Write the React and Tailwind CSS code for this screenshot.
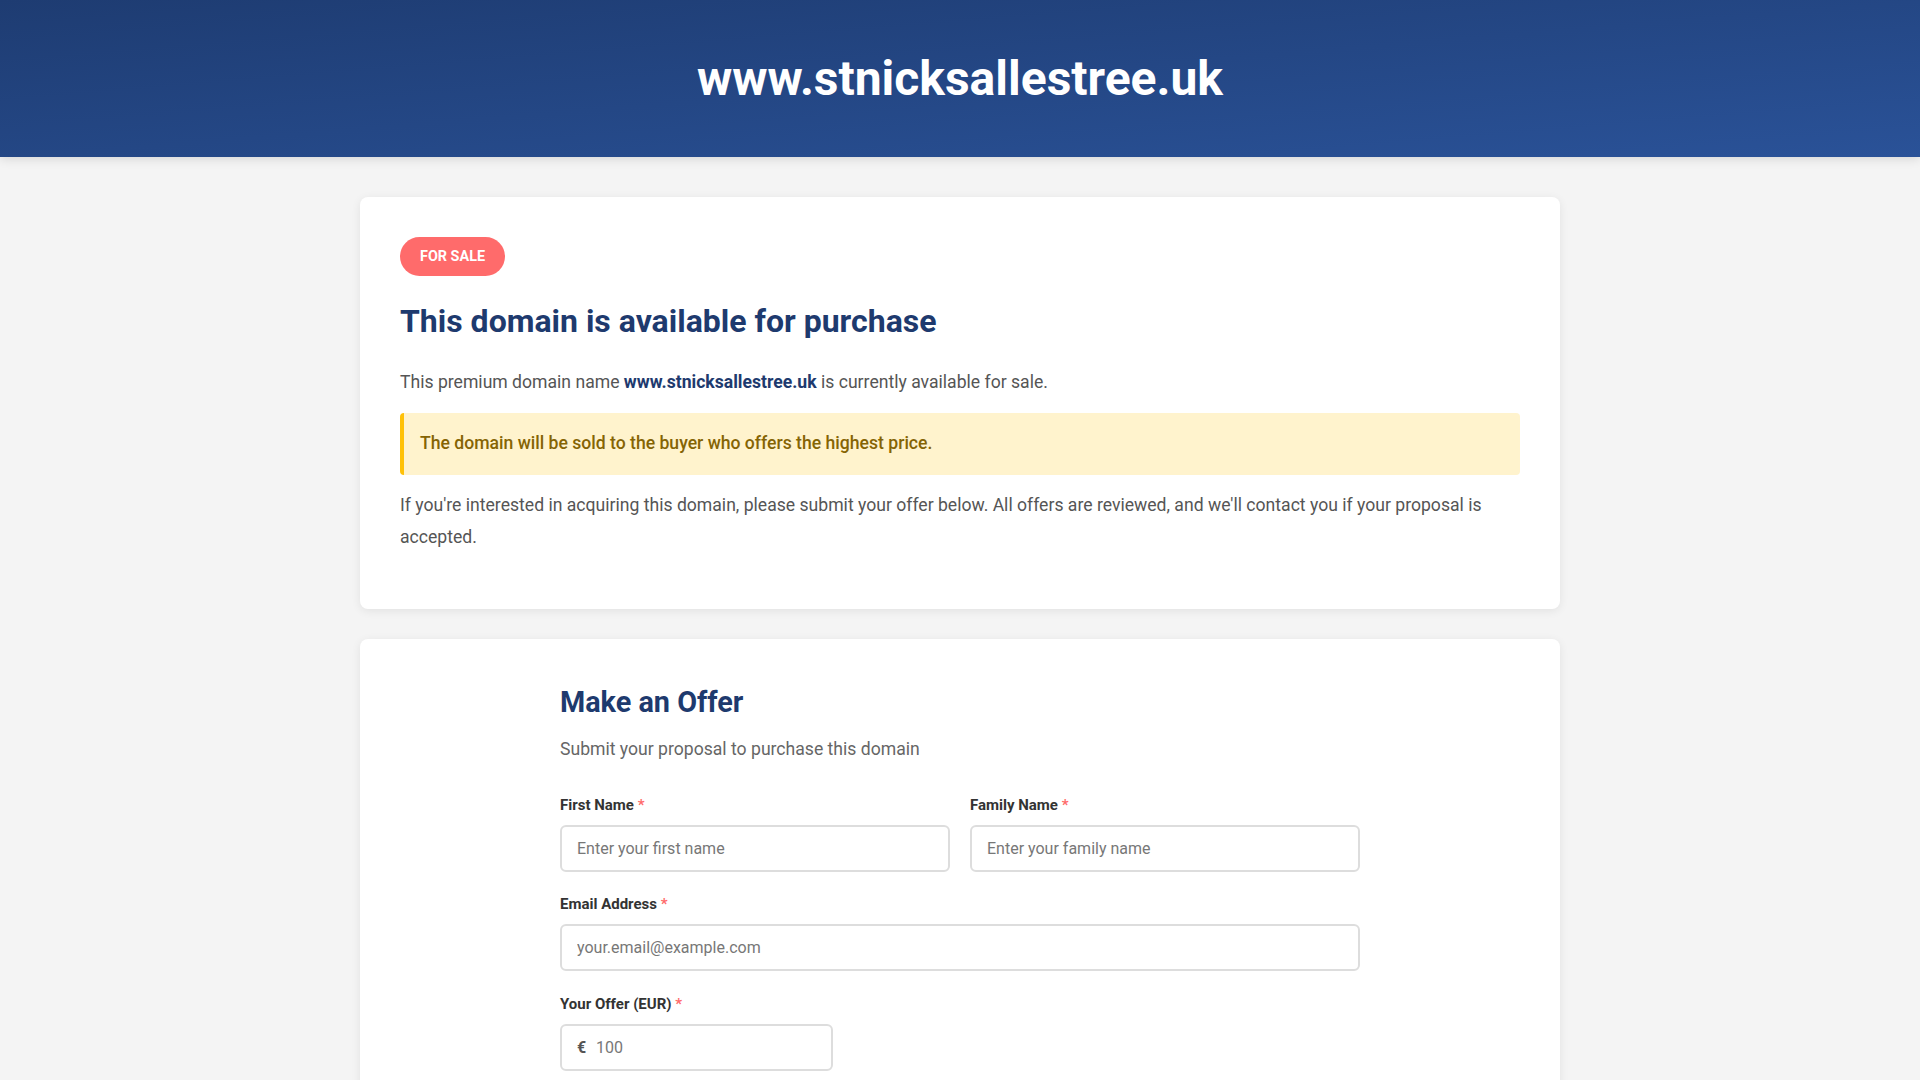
import React from 'react';

const FONT = { fontFamily: 'Roboto, "Liberation Sans", sans-serif' };

function Field({ label, className = 'mb-[22px]', children }) {
  return (
    <div className={className}>
      <label className="block text-[15px] font-bold text-[#333] mb-[9px] leading-[22px]">
        {label} <span className="text-[#ff6b6b]">*</span>
      </label>
      {children}
    </div>
  );
}

const inputCls =
  'w-full h-[47px] border-2 border-[#ddd] rounded-md px-[15px] text-base text-[#333] placeholder:text-[#777] bg-white outline-none';

export default function App() {
  return (
    <div className="min-h-screen bg-[#f4f4f4]" style={FONT}>
      {/* Header */}
      <header className="bg-gradient-to-br from-[#1e3c72] to-[#2a5298] shadow-[0_2px_10px_rgba(0,0,0,0.12)] py-[49.5px] text-center">
        <h1 className="text-[48px] leading-[57.6px] font-bold text-white">www.stnicksallestree.uk</h1>
      </header>

      <main className="max-w-[1200px] mx-auto pt-10 pb-10">
        {/* Sale info */}
        <section className="bg-white rounded-lg shadow-[0_2px_10px_rgba(0,0,0,0.08)] p-10">
          <div className="w-fit bg-[#ff6b6b] text-white text-[14.4px] font-bold uppercase px-5 leading-[39px] rounded-full">
            For Sale
          </div>
          <h2 className="mt-[26px] text-[32px] leading-[38px] font-bold text-[#1e3a6e]">
            This domain is available for purchase
          </h2>
          <p className="mt-[27px] text-[17.6px] leading-[31.7px] text-[#555]">
            This premium domain name <strong className="text-[#1e3a6e] font-bold">www.stnicksallestree.uk</strong> is currently available for sale.
          </p>
          <div className="mt-[15px] bg-[#fff3cd] border-l-4 border-[#ffc107] rounded-[4px] px-4 py-[15px] text-[17.6px] leading-[31.7px] font-medium text-[#856404]">
            The domain will be sold to the buyer who offers the highest price.
          </div>
          <p className="mt-[15px] mb-4 text-[17.6px] leading-[31.7px] text-[#555]">
            If you're interested in acquiring this domain, please submit your offer below. All offers are reviewed, and we'll contact you if your proposal is accepted.
          </p>
        </section>

        {/* Offer form */}
        <section className="mt-[30px] bg-white rounded-lg shadow-[0_2px_10px_rgba(0,0,0,0.08)] p-10">
          <div className="max-w-[800px] mx-auto pt-[6px]">
            <h2 className="text-[28.8px] leading-[34px] font-bold text-[#1e3a6e]">Make an Offer</h2>
            <p className="mt-[16px] text-[17.6px] leading-[28px] text-[#666]">Submit your proposal to purchase this domain</p>

            <form className="mt-[31px]">
              <div className="grid grid-cols-2 gap-5">
                <Field label="First Name" className="mb-[21px]">
                  <input className={inputCls} placeholder="Enter your first name" />
                </Field>
                <Field label="Family Name" className="mb-[21px]">
                  <input className={inputCls} placeholder="Enter your family name" />
                </Field>
              </div>
              <Field label="Email Address">
                <input className={inputCls} placeholder="your.email@example.com" />
              </Field>
              <Field label="Your Offer (EUR)">
                <div className="relative w-[273px]">
                  <span className="absolute left-[17px] top-1/2 -translate-y-1/2 text-base font-bold text-[#555]">€</span>
                  <input className={inputCls + ' pl-[34px]'} placeholder="100" />
                </div>
              </Field>
            </form>
          </div>
        </section>
      </main>
    </div>
  );
}
